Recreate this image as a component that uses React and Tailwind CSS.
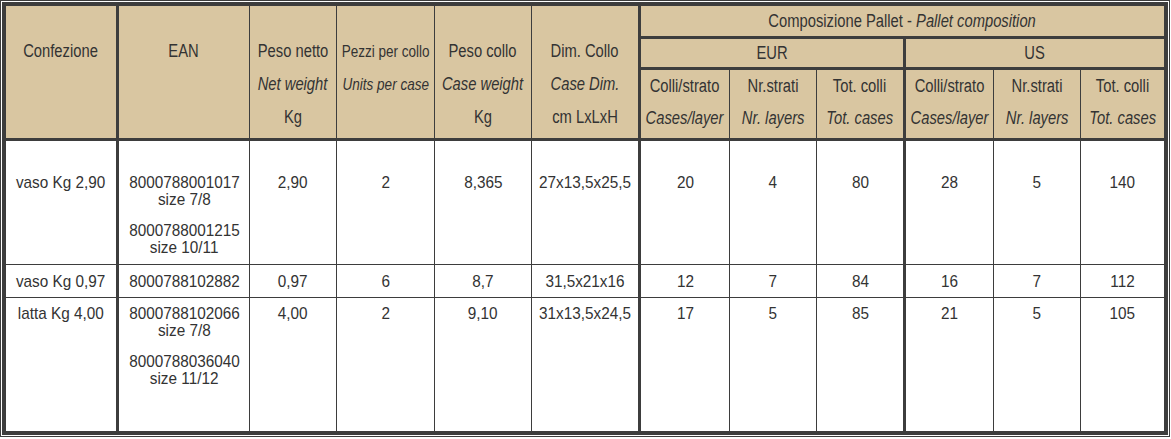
import React from "react";

const rightBorder = [
  "border-r-[3px]",
  "border-r",
  "border-r",
  "border-r",
  "border-r",
  "border-r-[3px]",
  "border-r",
  "border-r",
  "border-r-[3px]",
  "border-r",
  "border-r",
  "",
];

const rows = [
  {
    pad: "pt-[33px]",
    last: false,
    cells: [
      "vaso Kg 2,90",
      [
        ["8000788001017", "size 7/8"],
        ["8000788001215", "size 10/11"],
      ],
      "2,90",
      "2",
      "8,365",
      "27x13,5x25,5",
      "20",
      "4",
      "80",
      "28",
      "5",
      "140",
    ],
  },
  {
    pad: "pt-[8px]",
    last: false,
    cells: [
      "vaso Kg 0,97",
      [["8000788102882"]],
      "0,97",
      "6",
      "8,7",
      "31,5x21x16",
      "12",
      "7",
      "84",
      "16",
      "7",
      "112",
    ],
  },
  {
    pad: "pt-[7px]",
    last: true,
    cells: [
      "latta Kg 4,00",
      [
        ["8000788102066", "size 7/8"],
        ["8000788036040", "size 11/12"],
      ],
      "4,00",
      "2",
      "9,10",
      "31x13,5x24,5",
      "17",
      "5",
      "85",
      "21",
      "5",
      "105",
    ],
  },
];

const mainHeaders = [
  { it: "Confezione", en: null, unit: null },
  { it: "EAN", en: null, unit: null },
  { it: "Peso netto", en: "Net weight", unit: "Kg" },
  { it: "Pezzi per collo", en: "Units per case", unit: null, small: true },
  { it: "Peso collo", en: "Case weight", unit: "Kg" },
  { it: "Dim. Collo", en: "Case Dim.", unit: "cm LxLxH" },
];

const palletHeaders = [
  { it: "Colli/strato", en: "Cases/layer" },
  { it: "Nr.strati", en: "Nr. layers" },
  { it: "Tot. colli", en: "Tot. cases" },
];

const HEAD = "bg-[#d9c6a1] border-[#3d3d3d]";

// condensed look: Liberation Sans squeezed horizontally
const H = ({ children, className = "" }) => (
  <span className={`inline-block scale-x-[0.82] ${className}`}>{children}</span>
);
const D = ({ children }) => (
  <span className="inline-block scale-x-[0.9]">{children}</span>
);

const App = () => {
  return (
    <div className="w-[1170px] h-[437px] border border-[#3d3d3d] p-px bg-white font-['Liberation_Sans',Arial,sans-serif] text-[#333333]">
      <div className="grid grid-cols-[113px_131px_87px_98px_97px_109px_89px_87px_89px_88px_87px_83px] grid-rows-[33px_31px_71px_124px_33px_133px] border-4 border-[#3d3d3d] h-full">
        {mainHeaders.map((h, i) => (
          <div
            key={h.it}
            className={`${HEAD} ${rightBorder[i]} border-b-[3px] row-span-3 flex flex-col items-center pt-[29px] leading-[33px] whitespace-nowrap ${
              h.small ? "text-[16.5px]" : "text-[18px]"
            }`}
            style={{ gridColumn: i + 1, gridRow: "1 / span 3" }}
          >
            <H>{h.it}</H>
            {h.en && <H className="italic">{h.en}</H>}
            {h.unit && <H>{h.unit}</H>}
          </div>
        ))}

        <div
          className={`${HEAD} border-b-[3px] flex items-center justify-center text-[18px] whitespace-nowrap`}
          style={{ gridColumn: "7 / span 6", gridRow: 1 }}
        >
          <H>
            Composizione Pallet - <span className="italic">Pallet composition</span>
          </H>
        </div>

        <div
          className={`${HEAD} border-r-[3px] border-b-[3px] flex items-center justify-center text-[18px]`}
          style={{ gridColumn: "7 / span 3", gridRow: 2 }}
        >
          <H>EUR</H>
        </div>
        <div
          className={`${HEAD} border-b-[3px] flex items-center justify-center text-[18px]`}
          style={{ gridColumn: "10 / span 3", gridRow: 2 }}
        >
          <H>US</H>
        </div>

        {[0, 1].map((g) =>
          palletHeaders.map((h, j) => {
            const col = 7 + g * 3 + j;
            return (
              <div
                key={`${g}-${j}`}
                className={`${HEAD} ${rightBorder[col - 1]} border-b-[3px] flex flex-col items-center leading-[32px] text-[18px] whitespace-nowrap`}
                style={{ gridColumn: col, gridRow: 3 }}
              >
                <H>{h.it}</H>
                <H className="italic">{h.en}</H>
              </div>
            );
          })
        )}

        {rows.map((row, r) =>
          row.cells.map((cell, c) => (
            <div
              key={`${r}-${c}`}
              className={`border-[#3d3d3d] ${rightBorder[c]} ${
                row.last ? "" : "border-b"
              } ${row.pad} flex flex-col items-center text-[17px] leading-[17px] whitespace-nowrap`}
              style={{ gridColumn: c + 1, gridRow: r + 4 }}
            >
              {Array.isArray(cell)
                ? cell.map((group, k) => (
                    <div
                      key={k}
                      className={`flex flex-col items-center ${k > 0 ? "mt-[14px]" : ""}`}
                    >
                      {group.map((line) => (
                        <D key={line}>{line}</D>
                      ))}
                    </div>
                  ))
                : <D>{cell}</D>}
            </div>
          ))
        )}
      </div>
    </div>
  );
};

export default App;
